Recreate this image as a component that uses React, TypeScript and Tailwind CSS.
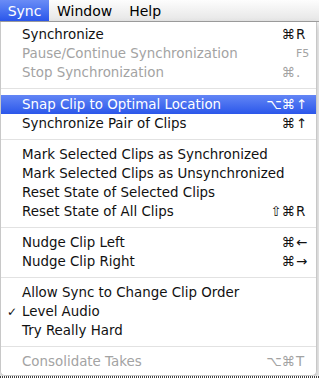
import React from 'react';

type Item =
  | { sep: true; tall?: boolean }
  | {
      sep?: false;
      label: string;
      mods?: string;
      keyChar?: string;
      disabled?: boolean;
      active?: boolean;
      checked?: boolean;
      small?: boolean;
    };

const items: Item[] = [
  { label: 'Synchronize', mods: '⌘', keyChar: 'R' },
  { label: 'Pause/Continue Synchronization', keyChar: 'F5', disabled: true, small: true },
  { label: 'Stop Synchronization', mods: '⌘', keyChar: '.', disabled: true },
  { sep: true, tall: true },
  { label: 'Snap Clip to Optimal Location', mods: '⌥⌘', keyChar: '↑', active: true },
  { label: 'Synchronize Pair of Clips', mods: '⌘', keyChar: '↑' },
  { sep: true },
  { label: 'Mark Selected Clips as Synchronized' },
  { label: 'Mark Selected Clips as Unsynchronized' },
  { label: 'Reset State of Selected Clips' },
  { label: 'Reset State of All Clips', mods: '⇧⌘', keyChar: 'R' },
  { sep: true },
  { label: 'Nudge Clip Left', mods: '⌘', keyChar: '←' },
  { label: 'Nudge Clip Right', mods: '⌘', keyChar: '→' },
  { sep: true },
  { label: 'Allow Sync to Change Clip Order' },
  { label: 'Level Audio', checked: true },
  { label: 'Try Really Hard' },
  { sep: true },
  { label: 'Consolidate Takes', mods: '⌥⌘', keyChar: 'T', disabled: true },
];

const MenuRow = ({ item }: { item: Exclude<Item, { sep: true }> }) => {
  const color = item.active
    ? 'text-white bg-gradient-to-b from-[#6385f5] to-[#2b56ea]'
    : item.disabled
    ? 'text-[#a3a3a3]'
    : 'text-[#111]';
  return (
    <div className={`relative flex h-[19px] items-center pl-[21px] ${color}`}>
      {item.checked && <span className="absolute left-[6px] text-[12px]">✓</span>}
      <span>{item.label}</span>
      <div className="ml-auto flex items-center">
        <span className="text-right">{item.mods}</span>
        <span className={`w-[21px] pl-[1px] ${item.small ? 'text-[11px]' : ''}`}>{item.keyChar}</span>
      </div>
    </div>
  );
};

export default function App() {
  return (
    <div
      className="relative h-[378px] w-[319px] overflow-hidden bg-[#f4f4f4] text-[13.4px] leading-none"
      style={{ fontFamily: '"DejaVu Sans", "Noto Sans", sans-serif' }}
    >
      <div className="flex h-[22px] items-stretch border-b border-[#a0a0a0] bg-gradient-to-b from-[#fdfdfd] to-[#e6e6e6] text-[14px] text-black">
        <div className="flex w-[49px] items-center justify-center bg-gradient-to-b from-[#6a8cf6] to-[#2a55ea] text-white">
          Sync
        </div>
        <div className="flex items-center pl-[8px]">Window</div>
        <div className="flex items-center pl-[17px]">Help</div>
      </div>
      <div className="w-[317px] rounded-b-[5px] border-x border-b border-[#c8c8c8] bg-white/95 pt-[3px] pb-[4px] shadow-[0_3px_6px_rgba(0,0,0,0.25)]">
        {items.map((item, i) =>
          item.sep ? (
            <div key={i} className={`flex items-center ${item.tall ? 'h-[13px]' : 'h-[12px]'}`}>
              <div className="h-px w-full bg-[#e2e2e2]" />
            </div>
          ) : (
            <MenuRow key={i} item={item} />
          )
        )}
      </div>
      <div className="absolute bottom-0 left-0 h-[2px] w-full bg-[repeating-linear-gradient(90deg,#444_0_1px,#fff_1px_2px)]" />
    </div>
  );
}
